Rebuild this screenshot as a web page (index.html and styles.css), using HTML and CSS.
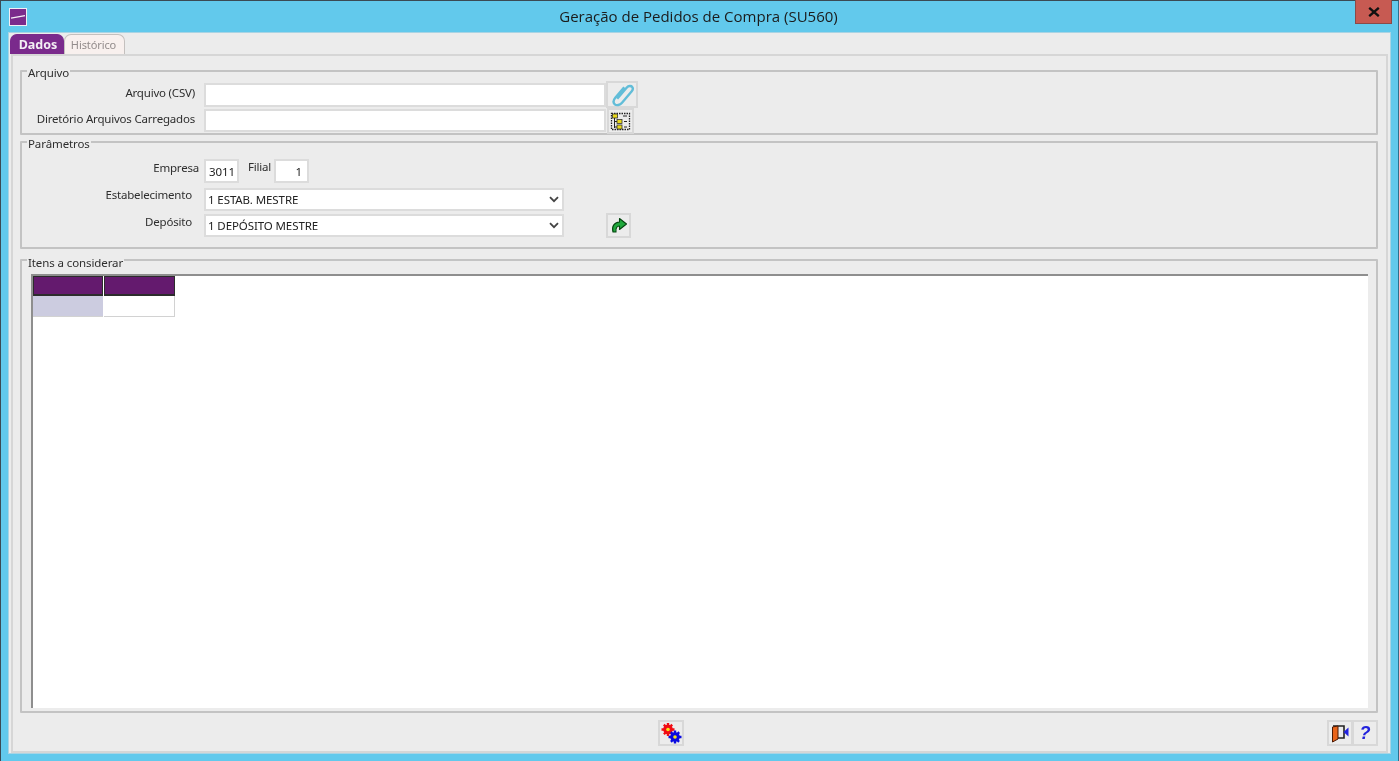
FILE: index.html
```html
<!DOCTYPE html>
<html lang="pt">
<head>
<meta charset="utf-8">
<title>Geração de Pedidos de Compra (SU560)</title>
<link rel="stylesheet" href="styles.css">
</head>
<body>
<div class="window">
  <header class="titlebar">
    <svg class="app-icon" viewBox="0 0 18 18" width="18" height="18"><rect x="0.5" y="0.5" width="17" height="17" fill="#7b2a8c" stroke="#f2eef4"/><path d="M2 10.2 16 7.6" stroke="#f5f0f7" stroke-width="1.3"/></svg>
    <h1 class="title">Geração de Pedidos de Compra (SU560)</h1>
    <button class="close" type="button" aria-label="Fechar"><svg viewBox="0 0 12 10" width="12" height="10"><path d="M1.2 .8 10.800 9.200M10.800 .8 1.2 9.200" stroke="#111" stroke-width="2.300"/></svg></button>
  </header>
  <main class="panel">
    <nav class="tabs">
      <span class="tab active">Dados</span>
      <span class="tab">Histórico</span>
    </nav>
    <section class="page">
      <div class="group group-file">
        <span class="legend">Arquivo</span>
        <div class="row row-csv">
          <label class="lbl lbl-file">Arquivo (CSV)</label>
          <input class="field field-path" type="text">
          <button class="btn btn-clip" type="button" aria-label="Anexar">
            <svg viewBox="0 0 26 26" width="25" height="25"><path d="M7.500 17.500 17.500 5.800c1.700-2 4.600-2 5.600-.6 1 1.300.6 3.200-.7 4.700L12.500 21.500c-2.200 2.600-5.700 3.300-7.500 1.700-1.900-1.700-1.300-4.700.7-7.100L14.800 5.400" fill="none" stroke="#62bdd8" stroke-width="2.500"/></svg>
          </button>
        </div>
        <div class="row row-dir">
          <label class="lbl lbl-file lbl-dir">Diretório Arquivos Carregados</label>
          <input class="field field-path field-short" type="text">
          <button class="btn btn-tree" type="button" aria-label="Diretório">
            <svg viewBox="0 0 21 19" width="21" height="19"><rect x="1.500" y="1.500" width="18" height="16" fill="none" stroke="#222" stroke-width="1.300" stroke-dasharray="1.500 1"/><path d="M4.500 3v13M4.500 9.500h4M4.500 15h4M13 4h4M14 9.500h3M14 15h3" stroke="#222" fill="none"/><rect x="2.500" y="2" width="5" height="4" fill="#e8d81c" stroke="#333" stroke-width=".8"/><rect x="7" y="7.500" width="5" height="4" fill="#e8d81c" stroke="#333" stroke-width=".8"/><rect x="7" y="13" width="5" height="4" fill="#e8d81c" stroke="#333" stroke-width=".8"/></svg>
          </button>
        </div>
      </div>
      <div class="group group-params">
        <span class="legend">Parâmetros</span>
        <div class="row row-company">
          <label class="lbl lbl-empresa">Empresa</label>
          <input class="field field-num" type="text" value="3011">
          <label class="lbl lbl-filial">Filial</label>
          <input class="field field-num field-right" type="text" value="1">
        </div>
        <div class="row row-est">
          <label class="lbl lbl-select lbl-est">Estabelecimento</label>
          <div class="select"><span>1 ESTAB. MESTRE</span><svg viewBox="0 0 10 7" width="10" height="7"><path d="M1 1.200 5 5.200 9 1.200" fill="none" stroke="#444" stroke-width="1.800"/></svg></div>
        </div>
        <div class="row row-dep">
          <label class="lbl lbl-select">Depósito</label>
          <div class="select"><span>1 DEPÓSITO MESTRE</span><svg viewBox="0 0 10 7" width="10" height="7"><path d="M1 1.200 5 5.200 9 1.200" fill="none" stroke="#444" stroke-width="1.800"/></svg></div>
          <button class="btn btn-go" type="button" aria-label="Avançar">
            <svg viewBox="0 0 18 18" width="18" height="18"><path d="M3 16C1.500 10.500 4 6.500 9.500 6V2.500L16.500 8l-7 5.500V10C7 10 5.500 11.800 6 16Z" fill="#1fa83c" stroke="#04460f" stroke-width="1.100" stroke-linejoin="round"/></svg>
          </button>
        </div>
      </div>
      <div class="group group-items">
        <span class="legend legend-items">Itens a considerar</span>
        <div class="grid">
          <div class="grid-table">
            <div class="hcell"></div><div class="hcell"></div>
            <div class="cell cell-fixed"></div><div class="cell"></div>
          </div>
        </div>
      </div>
      <footer class="actions">
        <button class="btn btn-run" type="button" aria-label="Executar">
          <svg viewBox="0 0 22 22" width="22" height="22"><g fill="#f00d14"><circle cx="8" cy="7.500" r="4.800"/><path d="M6.800 1h2.400v13H6.800zM1.500 6.300h13v2.400h-13zM3 3.400l1.700-1.700 8.200 9.700-1.700 1.700zM13 3.400l-1.700-1.700-8.200 9.700 1.700 1.700z"/></g><circle cx="8" cy="7.500" r="1.800" fill="#f5e51b"/><g fill="#0a0ae0"><circle cx="15" cy="15" r="4.800"/><path d="M13.800 8.500h2.400v13h-2.400zM8.500 13.800h13v2.400h-13zM10 11l1.700-1.700 8.200 9.700-1.700 1.700zM20 11l-1.700-1.700-8.200 9.700 1.700 1.700z"/></g><circle cx="15" cy="15" r="1.800" fill="#f5e51b"/></svg>
        </button>
        <div class="actions-right">
          <button class="btn btn-exit" type="button" aria-label="Sair">
            <svg viewBox="0 0 20 20" width="20" height="20"><path d="M3 3h11v12H8" fill="none" stroke="#222" stroke-width="1.600"/><path d="M2.500 4 8 3v13l-5.500 3Z" fill="#e8641a" stroke="#4a1a05"/><path d="M13.500 9 18.500 4.500v9Z" fill="#2222e0"/></svg>
          </button>
          <button class="btn btn-help" type="button" aria-label="Ajuda">?</button>
        </div>
      </footer>
    </section>
  </main>
</div>
</body>
</html>
```
FILE: styles.css
```css
* { box-sizing: border-box; }
html, body { margin: 0; height: 100%; overflow: hidden; }
body { font-family: "Noto Sans", "Open Sans", sans-serif; font-size: 11.500px; letter-spacing: -.2px; color: #2e2e2e; }

.window {
  width: 1399px; height: 761px;
  display: flex; flex-direction: column;
  background: #62c9ec;
  border: 1px solid #3b4a54;
  border-bottom-width: 0;
  border-right-color: #2f6f8c;
  padding: 0 7px 7px 7px;
  filter: blur(.3px);
}
.titlebar { height: 31px; flex: none; position: relative; display: flex; justify-content: center; align-items: center; }
.app-icon { position: absolute; left: 1px; top: 7px; }
.title { margin: 0; font: 400 15px "Open Sans", sans-serif; letter-spacing: 0; color: #1b1b1b; position: relative; top: -1px; left: -1px; }
.close {
  position: absolute; right: -1px; top: -1px;
  width: 37px; height: 24px; padding: 0;
  display: flex; align-items: center; justify-content: center;
  background: #c75a52; border: 1px solid #8a4a48; border-top: 0;
}

.panel {
  flex: 1; min-height: 0;
  display: flex; flex-direction: column;
  background: #ececec;
  border: 1px solid #a9d4e4;
  padding: 1px 2px 0 1px;
}
.tabs { display: flex; height: 20px; flex: none; position: relative; z-index: 1; }
.tab {
  width: 61px; height: 20px;
  display: flex; align-items: center; justify-content: center;
  border-radius: 7px 7px 0 0;
  background: #f8f0ee; color: #938c8c; font-size: 11px; letter-spacing: -.1px;
  border: 1px solid #c4c0be; border-bottom: 0;
  padding-right: 2px;
}
.tab.active { width: 54px; background: #7a2a8c; border-color: #7a2a8c; color: #f3eef4; font-weight: 700; font-size: 12.500px; letter-spacing: 0; padding: 0 0 0 2px; }

.page {
  flex: 1; min-height: 0;
  display: flex; flex-direction: column;
  margin: 0 0 0 1px;
  border: 2px solid #d6d6d6;
  padding: 14px 8px 5px 7px;
  gap: 6px;
}
.group { position: relative; border: 2px solid #c3c3c3; flex: none; border-radius: 1px; }
.legend {
  position: absolute; left: 5px; top: -6px;
  background: #ececec; padding: 0 1px; line-height: 13px; letter-spacing: -.1px;
}
.legend-items { top: -5px; }
.group-file { height: 65px; padding-top: 9px; }
.group-params { height: 108px; padding-top: 15px; margin-bottom: 4px; }
.group-items { flex: 1; min-height: 0; padding: 13px 8px 3px 9px; }

.row { display: flex; align-items: center; }
.row-csv { height: 27px; }
.row-dir { height: 26px; }
.row-company { height: 26px; margin-bottom: 2px; }
.row-est { height: 26px; }
.row-dep { height: 26px; }

.lbl { flex: none; text-align: right; white-space: nowrap; position: relative; top: -2px; }
.lbl-file { width: 173px; margin-right: 9px; }
.lbl-dir { top: -3px; }
.lbl-empresa { width: 177px; margin-right: 5px; top: -4px; }
.lbl-filial { width: 25px; margin: 0 3px 0 7px; top: -5px; }
.lbl-select { width: 170px; margin-right: 12px; top: -4px; }
.lbl-est { top: -5px; }

.field {
  border: 2px solid #dcdcdc; background: #fff; height: 24px; padding: 2px 3px;
  font: 11.500px "Noto Sans", sans-serif; letter-spacing: -.1px; color: #222; outline: 0;
  flex: none;
}
.field-path { width: 402px; height: 24px; }
.field-short { height: 23px; margin-top: -2px; }
.field-num { width: 35px; height: 24px; }
.field-right { text-align: right; padding-right: 5px; }

.select {
  width: 360px; height: 23px; flex: none;
  border: 2px solid #dcdcdc; background: #fff;
  display: flex; align-items: center; justify-content: space-between;
  padding: 1px 3px 0 2px; letter-spacing: -.1px; color: #222;
}

.btn {
  display: inline-flex; align-items: center; justify-content: center;
  padding: 0; background: #ececec; border: 2px solid #d8d8d8;
  flex: none;
}
.btn-clip { width: 32px; height: 27px; }
.btn-tree { width: 27px; height: 26px; margin-left: 1px; }
.btn-go { width: 25px; height: 25px; margin-left: 42px; }

.grid { height: 100%; background: #fff; border-left: 2px solid #8e8e8e; border-top: 2px solid #8e8e8e; }
.grid-table { display: grid; grid-template-columns: 70px 71px; grid-template-rows: 20px 21px; gap: 0 1px; width: 142px; }
.hcell { background: #641a6e; border: 1px solid #2c2c2c; border-bottom-width: 2px; }
.cell { background: #fff; border-right: 1px solid #d2d2d2; border-bottom: 1px solid #d2d2d2; }
.cell-fixed { background: #cccce0; border-right: 0; border-bottom: 1px solid #d2d2d2; }

.actions { flex: none; height: 26px; position: relative; display: flex; justify-content: center; margin-top: 1px; }
.btn-run { width: 26px; height: 26px; position: relative; left: -28px; }
.actions-right { position: absolute; right: 0; top: 0; display: flex; }
.btn-exit { width: 26px; height: 26px; }
.btn-help { width: 26px; height: 26px; margin-left: -1px; color: #2222dd; font: italic 700 18px "Liberation Sans", sans-serif; }
```
